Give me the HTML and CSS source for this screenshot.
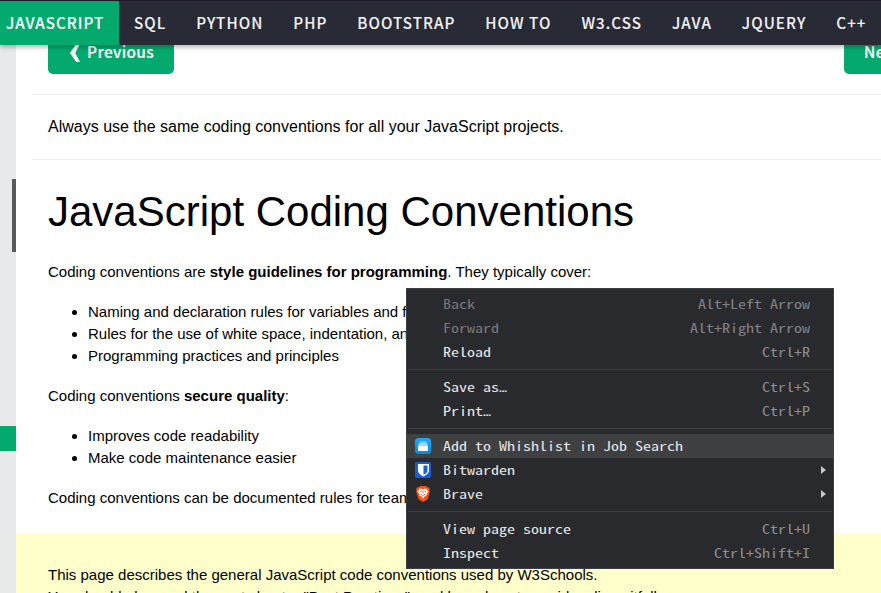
FILE: index.html
```html
<!DOCTYPE html>
<html lang="en">
<head>
<meta charset="utf-8">
<title>JavaScript Coding Conventions</title>
<link rel="stylesheet" href="styles.css">
</head>
<body>
<nav class="topnav">
  <a class="active">JAVASCRIPT</a><a>SQL</a><a>PYTHON</a><a>PHP</a><a>BOOTSTRAP</a><a>HOW TO</a><a>W3.CSS</a><a>JAVA</a><a>JQUERY</a><a>C++</a>
</nav>
<div class="page">
  <aside class="side"><div class="thumb"></div><div class="current"></div></aside>
  <main class="main">
    <div class="pager"><a class="btn"><svg class="chev" viewBox="0 0 10 18"><path d="M10 0H6.200L0 9L6.200 18H10L5.200 9Z"/></svg><span>Previous</span></a><a class="btn next"><span>Next ❯</span></a></div>
    <hr>
    <p class="intro">Always use the same coding conventions for all your JavaScript projects.</p>
    <hr>
    <h1>JavaScript Coding Conventions</h1>
    <p>Coding conventions are <b>style guidelines for programming</b>. They typically cover:</p>
    <ul>
      <li>Naming and declaration rules for variables and f</li>
      <li>Rules for the use of white space, indentation, an</li>
      <li>Programming practices and principles</li>
    </ul>
    <p>Coding conventions <b>secure quality</b>:</p>
    <ul>
      <li>Improves code readability</li>
      <li>Make code maintenance easier</li>
    </ul>
    <p>Coding conventions can be documented rules for team</p>
    <div class="note">This page describes the general JavaScript code conventions used by W3Schools.<br>You should also read the next chapter "Best Practices", and learn how to avoid coding pitfalls.</div>
  </main>
</div>
<div class="menu">
  <div class="row off"><span>Back</span><kbd>Alt+Left Arrow</kbd></div>
  <div class="row off"><span>Forward</span><kbd>Alt+Right Arrow</kbd></div>
  <div class="row"><span>Reload</span><kbd>Ctrl+R</kbd></div>
  <div class="sep"></div>
  <div class="row"><span>Save as<b class="dots">…</b></span><kbd>Ctrl+S</kbd></div>
  <div class="row"><span>Print<b class="dots">…</b></span><kbd>Ctrl+P</kbd></div>
  <div class="sep"></div>
  <div class="row hover">
    <svg class="icon" viewBox="0 0 16 16"><defs><linearGradient id="sky" x2="0" y2="1"><stop stop-color="#1eaaf8"/><stop offset="1" stop-color="#0b8bd9"/></linearGradient></defs><rect width="16" height="16" rx="3.500" fill="url(#sky)"/><path d="M5 3h6v1.500H5z" fill="#6cc8f8"/><path d="M4.300 4.500h7.400l1.200 3.500H3.100z" fill="#9adcf9"/><path d="M3 8h10v4q0 1-1 1H4q-1 0-1-1z" fill="#fff"/></svg>
    <span>Add to Whishlist in Job Search</span></div>
  <div class="row">
    <svg class="icon" viewBox="0 0 16 16"><rect width="16" height="16" rx="2" fill="#175ddc"/><path d="M3 2h11v6.300c0 3-2.700 4.800-5.500 6.200C5.700 13.100 3 11.300 3 8.300z" fill="#fff"/><path d="M8.500 3.500h4v4.900c0 1.900-1.900 3.200-4 4.400z" fill="#175ddc"/></svg>
    <span>Bitwarden</span><i class="arrow"></i></div>
  <div class="row">
    <svg class="icon" viewBox="0 0 16 16"><path d="M5 0h6l1.500 1.400 1.300-.1 1.200 2-.5 1.500.3 1-1.900 6.400-1 1.500L8 16l-3.900-2.300-1-1.500L1.200 5.800l.3-1L1 3.300l1.200-2 1.300.1z" fill="#fb4f14"/><path d="M4.700 2.400L8 2.900l3.300-.5 2.200 3-1.700 2.200-.2 1.600-2 1.400L8 12.800l-1.600-2.200-2-1.400-.2-1.600-1.700-2.200z" fill="#fff"/><path d="M4.200 4.800l2.500.3-.5.900-1.200-.2zM11.800 4.800l-2.500.3.500.9 1.200-.2zM7.600 4.600h.8v3h-.8zM5.500 7.200l1.800 1.300-1.200.5zM10.500 7.200L8.700 8.500l1.200.5zM6.500 9.800L8 9.200l1.500.6L8 10.600z" fill="#fb4f14"/></svg>
    <span>Brave</span><i class="arrow"></i></div>
  <div class="sep"></div>
  <div class="row"><span>View page source</span><kbd>Ctrl+U</kbd></div>
  <div class="row"><span>Inspect</span><kbd>Ctrl+Shift+I</kbd></div>
</div>
</body>
</html>
```
FILE: styles.css
```css
* { box-sizing: border-box; }
html { overflow: hidden; }
body { margin: 0; width: 881px; height: 593px; overflow: hidden; background: #fff; color: #000; font: 15px/22px "Liberation Sans", sans-serif; }
.topnav { position: relative; z-index: 2; display: flex; height: 45px; padding-left: 6px; background: linear-gradient(90deg, #04aa6d 6px, #282a35 6px); border-top: 1px solid #1c1829; box-shadow: 0 2px 5px rgba(0,0,0,.3); }
.topnav a { flex: none; height: 44px; padding: 0 14.9px 0 15px; color: #f1f1f1; font: 500 15.2px/42px "Noto Sans CJK SC", sans-serif; letter-spacing: 1.05px; white-space: nowrap; -webkit-text-stroke: .1px; }
.topnav .active { width: 113px; padding: 0; background: #04aa6d; color: #fff; letter-spacing: 1px; }
.page { display: flex; height: 548px; overflow: hidden; }
.side { flex: none; width: 16px; padding-top: 134px; background: #e7e9eb; }
.thumb { width: 4px; height: 73px; margin-left: 12px; background: #58595b; }
.current { height: 25px; margin-top: 174px; background: #04aa6d; }
.main { flex: none; width: 881px; padding: 0 32px; }
.pager { display: flex; justify-content: space-between; height: 29px; width: 922px; }
.btn { display: flex; align-items: flex-start; justify-content: center; width: 126px; height: 42px; margin-top: -13px; background: #04aa6d; color: #fff; border-radius: 5px; font: 500 15.4px/38px "Noto Sans CJK SC", sans-serif; letter-spacing: .35px; -webkit-text-stroke: .15px; }
.chev { width: 10px; height: 18px; margin: 12px 7px 0 2px; fill: #fff; }
.next { justify-content: flex-start; padding-left: 20px; }
hr { height: 1px; margin: 20px -16px; border: 0; background: #eee; }
p { margin: 18px 0; }
.intro { margin: 20px 0; font-size: 16px; line-height: 24px; }
h1 { margin: 20px 0 18px; font-size: 42px; font-weight: 400; line-height: 63px; }
ul { margin: 18px 0; padding-left: 40px; }
.note { margin: 24px -32px 0; padding: 31px 32px; background: #ffffcc; }
.menu { position: absolute; z-index: 3; left: 406px; top: 288px; width: 428px; height: 281px; padding: 3px 0; background: #292a2d; border: 1px solid #3c3f42; color: #e4e4e4; font: 16px/24px "Noto Sans Mono CJK SC", "Liberation Mono", monospace; }
.row { position: relative; display: flex; height: 24px; padding: 0 23px 0 36px; white-space: pre; }
.row span, .row kbd { height: 24px; transform: scaleY(.8); transform-origin: 0 11px; }
.row kbd { margin-left: auto; color: #8b8d90; font: inherit; }
.off { color: #77787a; }
.off kbd { color: #808285; }
.dots { font: 13.33px/1 "DejaVu Sans Mono", monospace; }
.hover { background: #3f4042; }
.icon { position: absolute; left: 8px; top: 4px; width: 16px; height: 16px; }
.arrow { position: absolute; right: 7px; top: 8px; border: 4px solid transparent; border-left: 5px solid #c4c6c9; border-right: 0; }
.sep { height: 1px; margin: 5px 1px; background: #3c4043; }
```
